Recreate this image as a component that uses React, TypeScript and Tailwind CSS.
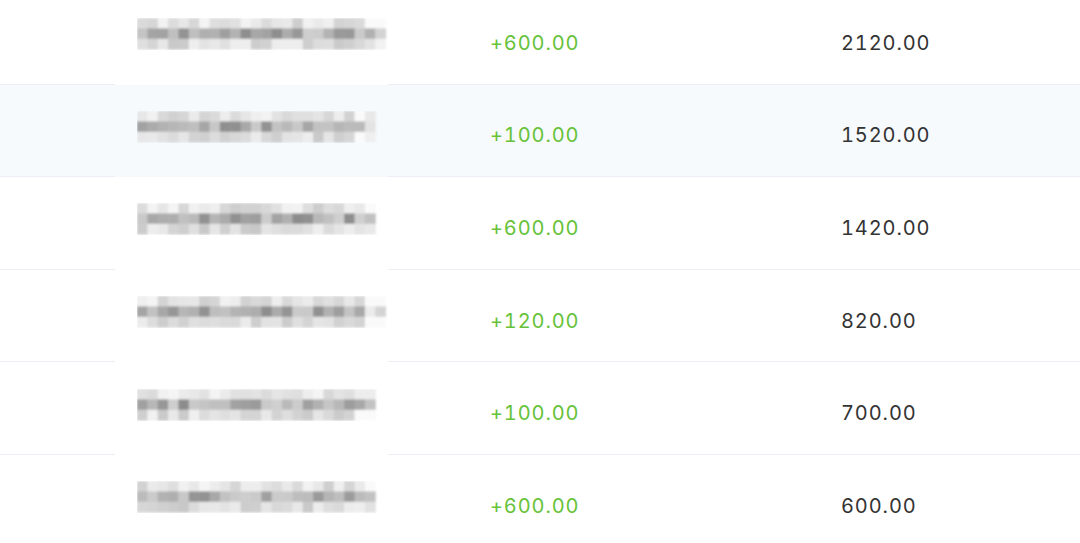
import React from 'react';

const rows = [
  { amount: '+600.00', balance: '2120.00', cells: 24, seed: 3 },
  { amount: '+100.00', balance: '1520.00', cells: 23, seed: 11, active: true },
  { amount: '+600.00', balance: '1420.00', cells: 23, seed: 29 },
  { amount: '+120.00', balance: '820.00', cells: 24, seed: 41 },
  { amount: '+100.00', balance: '700.00', cells: 23, seed: 57 },
  { amount: '+600.00', balance: '600.00', cells: 23, seed: 73 },
];

// cheap deterministic noise so each blurred name looks different
function rand(seed: number) {
  let s = seed;
  return () => {
    s = (s * 9301 + 49297) % 233280;
    return s / 233280;
  };
}

function Mosaic({ cells, seed }: { cells: number; seed: number }) {
  const r = rand(seed);
  const size = 10.4;
  const bands = [
    [205, 245],
    [140, 210],
    [200, 240],
  ];
  const rects: React.ReactNode[] = [];
  bands.forEach(([lo, hi], y) => {
    for (let x = 0; x < cells; x++) {
      let v = Math.round(lo + r() * (hi - lo));
      if (x >= cells - 2) v = Math.min(250, v + 25);
      const c = `rgb(${v},${v},${v})`;
      rects.push(<rect key={`${y}-${x}`} x={x * size} y={y * size} width={size + 0.5} height={size + 0.5} fill={c} />);
    }
  });
  return (
    <svg width={252} height={32} viewBox="0 0 252 32" className="mb-[8px]">
      <g filter={`url(#soft${seed})`}>{rects}</g>
      <defs>
        <filter id={`soft${seed}`}>
          <feGaussianBlur stdDeviation="0.9" />
        </filter>
      </defs>
    </svg>
  );
}

export default function App() {
  return (
    <div className="w-[1080px] h-[543px] overflow-hidden bg-white font-['Inter','Liberation_Sans',sans-serif] tabular-nums">
      <div className="-mt-[8px]">
        {rows.map((row, i) => (
          <div key={i} className={`flex h-[92.6px] ${row.active ? 'bg-[#f6fafd]' : 'bg-white'}`}>
            <div className="w-[115px] border-b border-[#ebeef5]" />
            <div className="w-[273px] pl-[22px] flex items-center">
              <Mosaic cells={row.cells} seed={row.seed} />
            </div>
            <div className="w-[453px] pl-[102px] pt-[10px] flex items-center border-b border-[#ebeef5] text-[20px] tracking-[0.9px] text-[#67c23a]">
              {row.amount}
            </div>
            <div className="flex-1 pt-[10px] flex items-center border-b border-[#ebeef5] text-[20px] tracking-[0.9px] text-[#333333]">
              {row.balance}
            </div>
          </div>
        ))}
      </div>
    </div>
  );
}
